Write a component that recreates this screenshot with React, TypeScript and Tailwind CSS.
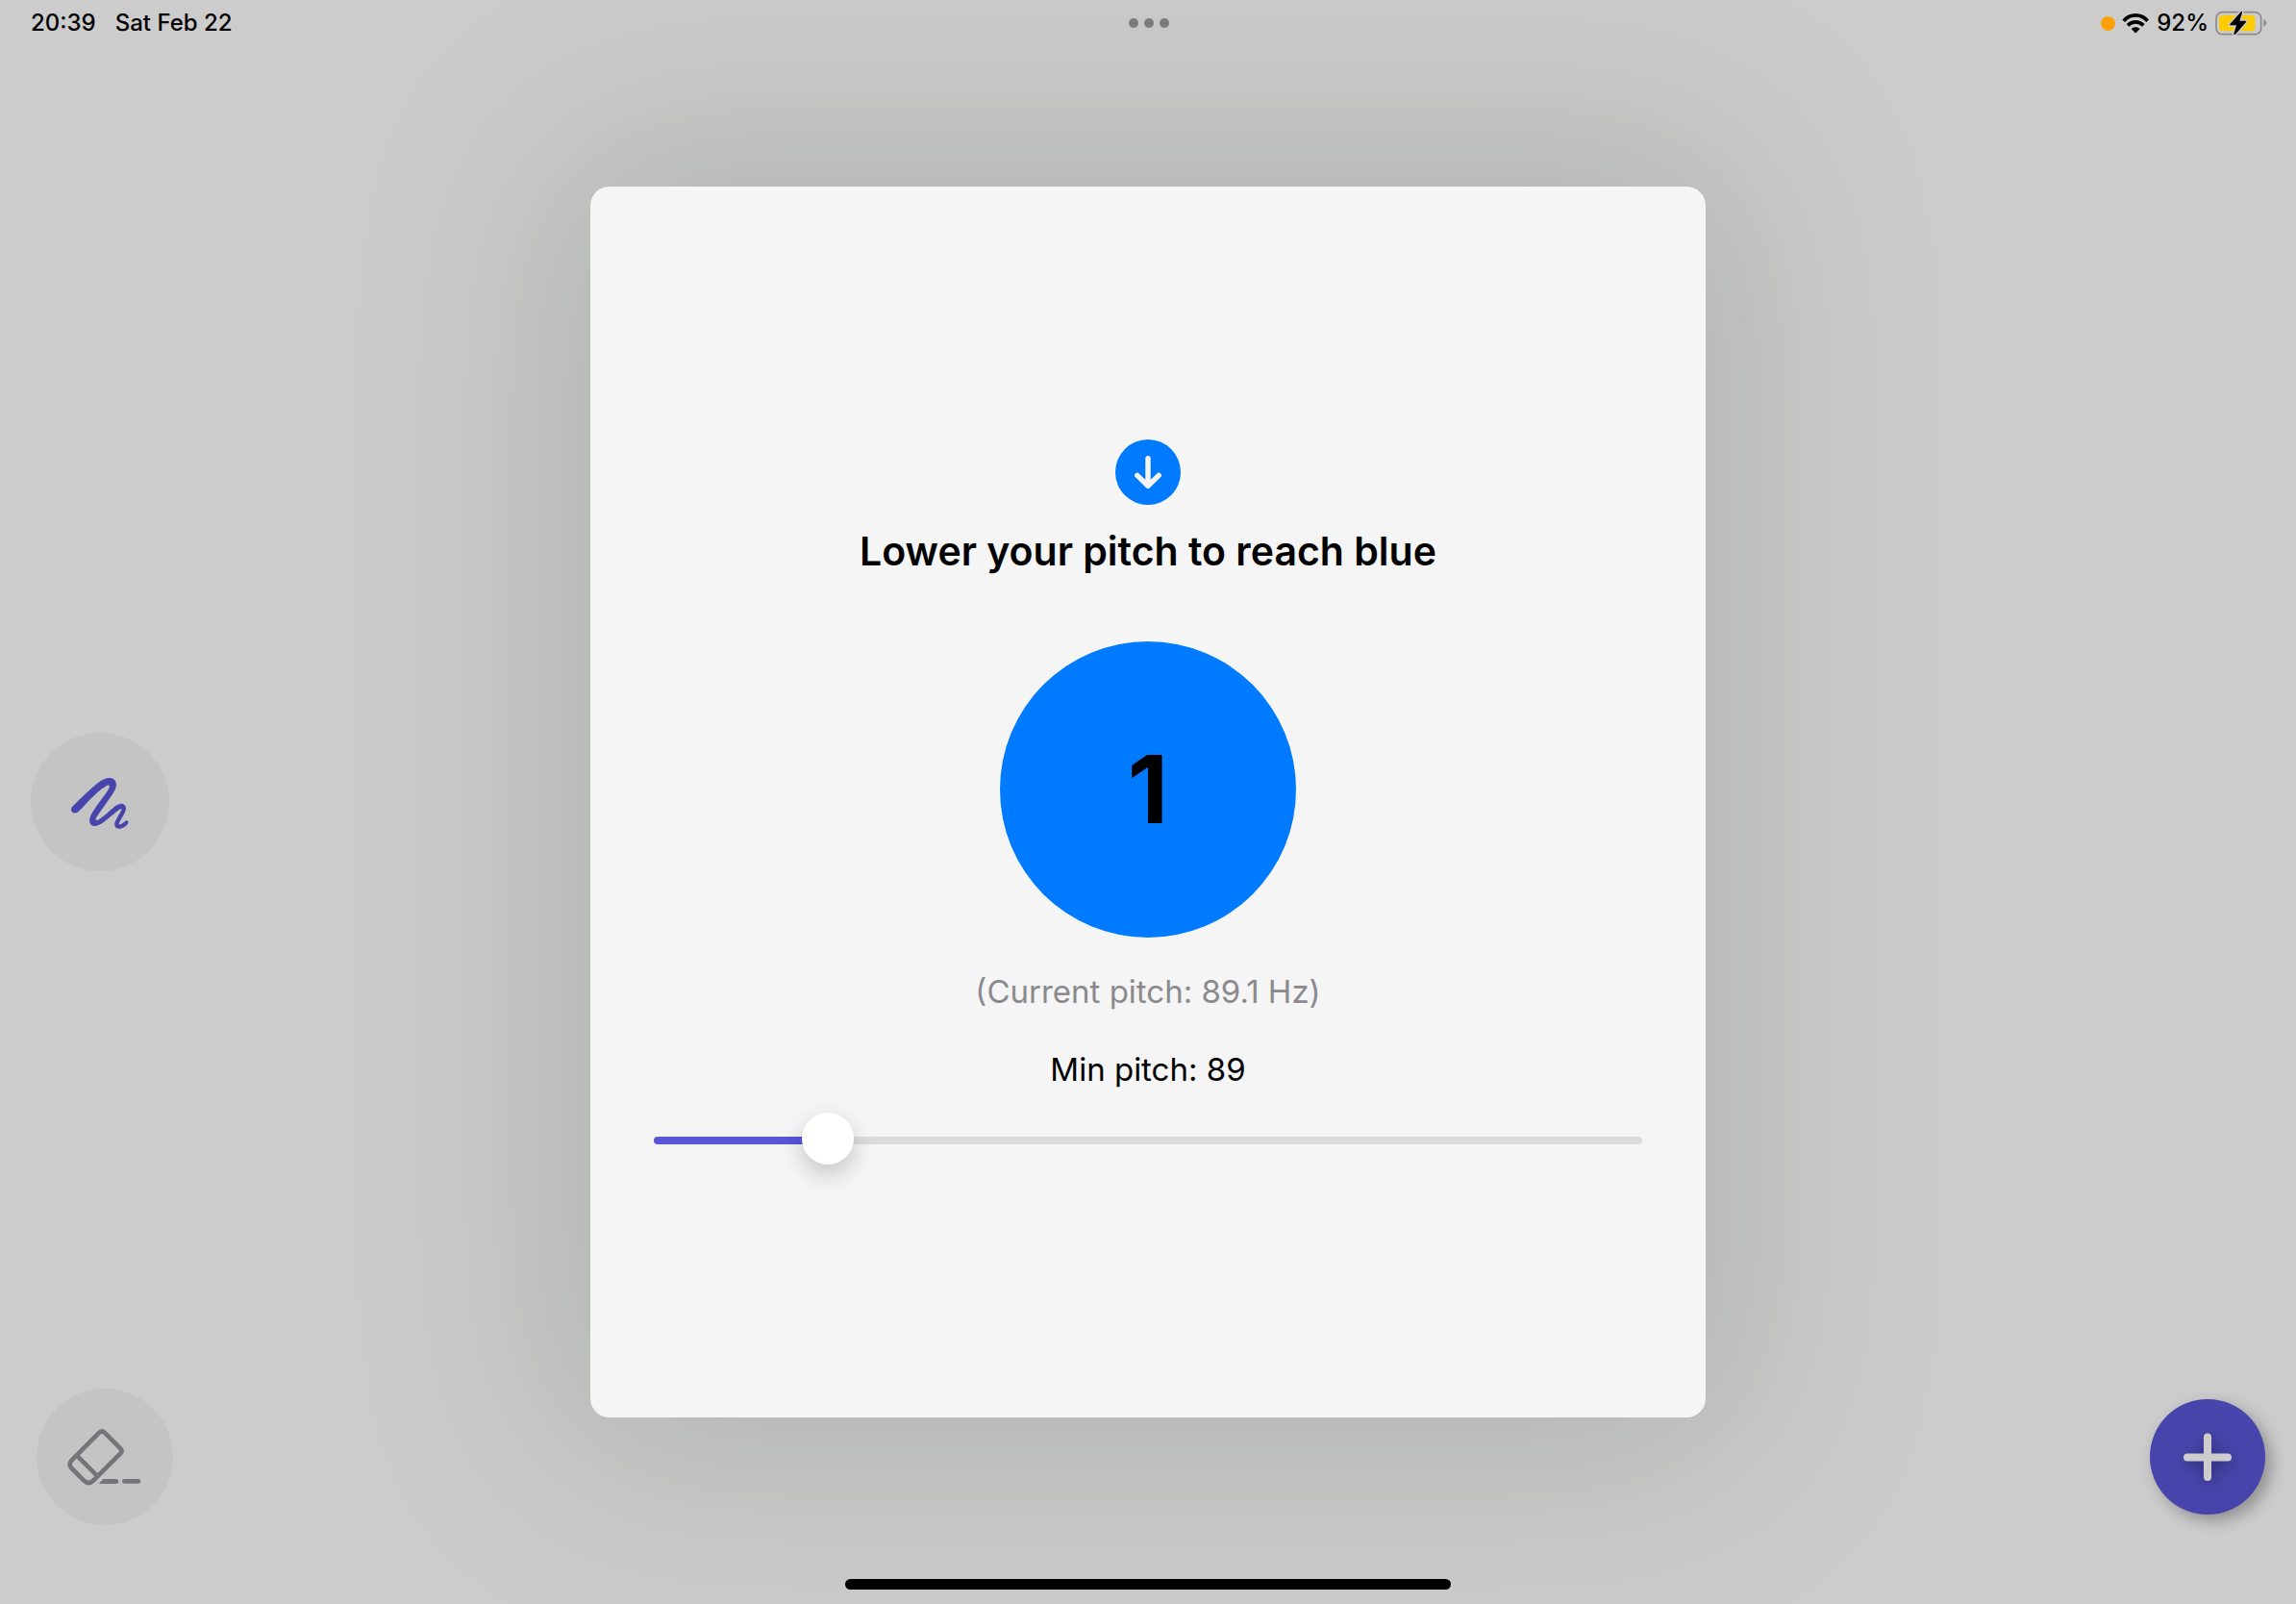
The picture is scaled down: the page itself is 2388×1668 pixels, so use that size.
import { useState } from "react";

const MIN = 70;
const MAX = 190;

function WifiIcon() {
  return (
    <svg viewBox="141 39 87 66" className="h-[22px] w-[29px]" aria-label="Wi-Fi">
      <g fill="none" stroke="#000" strokeWidth="11">
        <path d="M146 65 C167 42 200 42 221 65" />
        <path d="M159 79 C173 65 194 65 208 79" />
      </g>
      <path d="M170 90 C177 83 190 83 197 90 L186 101 Q183.500 104 181 101 Z" fill="#000" />
    </svg>
  );
}

function BatteryIcon() {
  return (
    <svg viewBox="435 30 162 84" className="h-[28px] w-[54px]" aria-label="Battery charging">
      <rect x="438" y="38" width="140" height="69" rx="19" fill="none" stroke="#8a8a8a" strokeWidth="5" />
      <path d="M586 61 C597 66 597 78 586 83 Z" fill="#8a8a8a" />
      <rect x="447" y="47" width="112" height="50" rx="11" fill="#ffcc00" />
      <path
        d="M516 36 L481 75 Q479 79 484 79 L501 79 L493 105 Q494 110 498 107 L531 69 Q533 65 529 65 L511 65 L519 40 Q520 34 516 36 Z"
        fill="#000"
        stroke="#cccccc"
        strokeWidth="9"
        paintOrder="stroke"
        strokeLinejoin="round"
      />
    </svg>
  );
}

function ScribbleIcon() {
  return (
    <svg viewBox="36 33 432 432" className="size-full" aria-hidden="true">
      <path
        fill="#4744ab"
        d="M168 261 C195 235 225 205 246 189 C262 177 276 172 288 175 C300 178 305 190 302 202 C298 217 284 236 272 252 C260 269 248 285 240 298 C237 304 240 308 246 305 C256 300 276 282 290 270 C302 259 313 252 323 255 C333 258 335 268 331 278 C327 289 317 303 312 314 C310 319 313 321 318 318 C323 315 327 311 331 308 C337 304 343 311 339 317 C333 324 323 332 312 332 C300 332 295 323 299 311 C303 300 313 287 318 276 C320 271 318 269 313 272 C301 280 283 297 268 308 C255 318 243 325 232 324 C220 322 217 309 221 297 C227 280 243 259 257 240 C267 226 277 213 281 203 C283 197 279 195 273 198 C258 206 240 223 222 240 C209 253 198 266 187 277 C170 294 153 275 168 261 Z"
      />
    </svg>
  );
}

function EraserIcon() {
  return (
    <svg viewBox="54 42 426 426" className="size-full" aria-hidden="true">
      <g fill="none" stroke="#757579" strokeWidth="14">
        <path d="M250 179 L167 262 C155 274 155 282 164 291 L201 328 C211 338 222 338 232 328 L316 244 Q323 237 316 229 L266 179 Q258 172 250 179 Z" />
        <path d="M179 250 L243 314" />
        <path d="M328 331 H372" strokeLinecap="round" />
      </g>
      <path d="M248 339 L259 327 Q262 324 266 324 H302 A7 7 0 0 1 302 339 Z" fill="#757579" />
    </svg>
  );
}

function PlusIcon() {
  return (
    <svg
      viewBox="0 0 120 120"
      className="size-full drop-shadow-[2px_4px_8px_rgba(0,0,0,0.35)]"
      aria-hidden="true"
    >
      <path d="M60 39.500 V81 M39 60.500 H81" stroke="#cdcdcd" strokeWidth="8" strokeLinecap="round" />
    </svg>
  );
}

function ArrowDownCircle() {
  return (
    <svg viewBox="0 0 68 68" className="size-[68px]" aria-hidden="true">
      <circle cx="34" cy="34" r="34" fill="#007aff" />
      <path
        d="M34 19.800 V47 M22.800 37.400 L34 48.200 L45.200 37.400"
        fill="none"
        stroke="#f5f5f5"
        strokeWidth="5.400"
        strokeLinecap="round"
        strokeLinejoin="round"
      />
    </svg>
  );
}

function StatusBar() {
  return (
    <header className="grid h-12 grid-cols-3 items-start pt-2 pr-[30px] pl-8 text-[24px] leading-8 font-medium">
      <div className="flex gap-5">
        <time>20:39</time>
        <span>Sat Feb 22</span>
      </div>
      <button type="button" aria-label="Window options" className="flex h-8 items-center justify-center gap-[6px]">
        <span className="size-[10px] rounded-full bg-[#7d7d7d]" />
        <span className="size-[10px] rounded-full bg-[#7d7d7d]" />
        <span className="size-[10px] rounded-full bg-[#7d7d7d]" />
      </button>
      <div className="flex items-center justify-end gap-[7px]">
        <span className="size-[15px] rounded-full bg-[#ff9f0a]" />
        <WifiIcon />
        <span>92%</span>
        <BatteryIcon />
      </div>
    </header>
  );
}

function PitchDialog() {
  const [pitch, setPitch] = useState(89);
  const percent = ((pitch - MIN) / (MAX - MIN)) * 100;
  return (
    <section
      role="dialog"
      aria-labelledby="pitch-title"
      className="flex w-full flex-col items-center rounded-[20px] bg-[#f5f5f5] px-[66px] pt-[263px] pb-[261px] shadow-[0_0_220px_40px_rgba(17,37,0,0.15)]"
    >
      <ArrowDownCircle />
      <h1 id="pitch-title" className="mt-[22px] text-[41px] leading-[52px] font-semibold">
        Lower your pitch to reach blue
      </h1>
      <div className="mt-[68px] flex size-[308px] items-center justify-center rounded-full bg-[#007aff] text-[98px] leading-none font-bold">
        1
      </div>
      <p className="mt-9 text-[33px] leading-10 text-[#8a8a8e]">(Current pitch: 89.1 Hz)</p>
      <label htmlFor="min-pitch" className="mt-[41px] text-[33px] leading-10">
        Min pitch: {pitch}
      </label>
      <input
        id="min-pitch"
        type="range"
        min={MIN}
        max={MAX}
        value={pitch}
        onChange={(e) => setPitch(Number(e.target.value))}
        style={{ "--fill": `${percent}%` } as React.CSSProperties}
        className="mt-[27px] h-[54px] w-full cursor-pointer appearance-none bg-transparent [&::-webkit-slider-runnable-track]:h-2 [&::-webkit-slider-runnable-track]:rounded-full [&::-webkit-slider-runnable-track]:bg-[linear-gradient(to_right,#5856d6_var(--fill),#dcdcdd_var(--fill))] [&::-webkit-slider-thumb]:-mt-[25px] [&::-webkit-slider-thumb]:size-[54px] [&::-webkit-slider-thumb]:appearance-none [&::-webkit-slider-thumb]:rounded-full [&::-webkit-slider-thumb]:bg-white [&::-webkit-slider-thumb]:shadow-[0_10px_24px_rgba(0,0,0,0.2)]"
      />
    </section>
  );
}

export default function App() {
  return (
    <div className="flex min-h-screen flex-col bg-[#cccccc] font-['Inter','Liberation_Sans',sans-serif] text-black">
      <StatusBar />
      <main className="grid flex-1 grid-cols-[1fr_minmax(0,1160px)_1fr] items-center">
        <div className="z-10 grid grid-rows-[1fr_auto_1fr] self-stretch pl-8">
          <button type="button" aria-label="Draw" className="row-start-2 size-36 rounded-full bg-[#c4c4c4]">
            <ScribbleIcon />
          </button>
          <button
            type="button"
            aria-label="Erase"
            className="row-start-3 mb-[34px] ml-[6px] size-[142px] self-end rounded-full bg-[#c4c4c4]"
          >
            <EraserIcon />
          </button>
        </div>
        <PitchDialog />
        <div className="z-10 flex items-end justify-end self-stretch pr-8 pb-[45px]">
          <button
            type="button"
            aria-label="Add"
            className="size-[120px] rounded-full bg-[#4745ab] shadow-[6px_6px_16px_rgba(0,0,0,0.3)]"
          >
            <PlusIcon />
          </button>
        </div>
      </main>
      <footer className="z-10 flex h-12 items-end justify-center pb-[15px]">
        <div className="h-[11px] w-[630px] rounded-full bg-black" />
      </footer>
    </div>
  );
}
